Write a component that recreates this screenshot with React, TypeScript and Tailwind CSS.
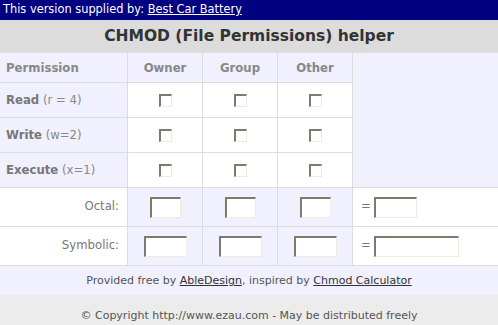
import { useState } from 'react';

const perms = [
  { name: 'Read', note: '(r = 4)' },
  { name: 'Write', note: '(w=2)' },
  { name: 'Execute', note: '(x=1)' },
];

function Box() {
  return (
    <span className="block h-[13px] w-[13px] border-l-2 border-t-2 border-b border-r border-l-[#7c7c6e] border-t-[#7c7c6e] border-b-[#ecece0] border-r-[#ecece0] bg-white" />
  );
}

function Field({ w }: { w: string }) {
  const [val, setVal] = useState('');
  return (
    <input
      value={val}
      onChange={(e) => setVal(e.target.value)}
      className={`${w} h-[21px] border-l-2 border-t-2 border-b border-r border-l-[#7c7c6e] border-t-[#7c7c6e] border-b-[#ecece0] border-r-[#ecece0] bg-white px-1 text-[11px] outline-none`}
    />
  );
}

export default function App() {
  return (
    <div className="w-[498px] h-[325px] bg-white font-['DejaVu_Sans',Verdana,sans-serif] text-[11.7px] overflow-hidden">
      <div className="h-[20px] bg-[#000080] text-white pl-[3px] leading-[19px] text-[11.4px]">
        This version supplied by: <a href="#" className="underline">Best Car Battery</a>
      </div>
      <div className="h-[33px] bg-[#dcdcdc] text-center text-[15.5px] font-bold text-[#333] leading-[33px]">
        CHMOD (File Permissions) helper
      </div>

      <div className="grid grid-cols-[127px_74px_74px_74px_1fr] grid-rows-[29px_34px_34px_34px_38px_38px] gap-px bg-[#dcdcdc] border-b border-[#dcdcdc]">
        <div className="bg-[#f0f0ff] flex items-center pl-[6px] pt-[2px] font-bold text-[#888]">Permission</div>
        <div className="bg-[#f0f0ff] flex items-center justify-center pt-[2px] font-bold text-[#888]">Owner</div>
        <div className="bg-[#f0f0ff] flex items-center justify-center pt-[2px] font-bold text-[#888]">Group</div>
        <div className="bg-[#f0f0ff] flex items-center justify-center pt-[2px] font-bold text-[#888]">Other</div>
        <div className="bg-[#f0f0ff] row-span-4" />

        {perms.map((p) => (
          <div key={p.name} className="contents">
            <div className="bg-[#f0f0ff] flex items-center pl-[6px] pt-[2px] text-[#888]">
              <span className="font-bold text-[#777]">{p.name}</span>&nbsp;{p.note}
            </div>
            <div className="bg-white flex items-center justify-center"><Box /></div>
            <div className="bg-white flex items-center justify-center"><Box /></div>
            <div className="bg-white flex items-center justify-center"><Box /></div>
          </div>
        ))}

        <div className="bg-white flex items-center justify-end pr-[8px] text-[#777]">Octal:</div>
        <div className="bg-[#f0f0ff] flex items-center justify-center"><Field w="w-[31px]" /></div>
        <div className="bg-[#f0f0ff] flex items-center justify-center"><Field w="w-[31px]" /></div>
        <div className="bg-[#f0f0ff] flex items-center justify-center"><Field w="w-[31px]" /></div>
        <div className="bg-white flex items-center pl-[8px] gap-[3px] text-[#777]">
          <span>=</span>
          <Field w="w-[43px]" />
        </div>

        <div className="bg-white flex items-center justify-end pr-[8px] text-[#777]">Symbolic:</div>
        <div className="bg-[#f0f0ff] flex items-center justify-center"><Field w="w-[43px]" /></div>
        <div className="bg-[#f0f0ff] flex items-center justify-center"><Field w="w-[43px]" /></div>
        <div className="bg-[#f0f0ff] flex items-center justify-center"><Field w="w-[43px]" /></div>
        <div className="bg-white flex items-center pl-[8px] gap-[3px] text-[#777]">
          <span>=</span>
          <Field w="w-[85px]" />
        </div>
      </div>

      <div className="h-[29px] bg-[#f0f0ff] flex items-center justify-center pt-[2px] text-[11px] text-[#555]">
        Provided free by&nbsp;<a href="#" className="underline text-[#333]">AbleDesign</a>, inspired by&nbsp;<a href="#" className="underline text-[#333]">Chmod Calculator</a>
      </div>
      <div className="h-[31px] bg-[#ececec] flex items-start justify-center pt-[13px] text-[11px] text-[#555]">
        © Copyright http://www.ezau.com - May be distributed freely
      </div>
    </div>
  );
}
